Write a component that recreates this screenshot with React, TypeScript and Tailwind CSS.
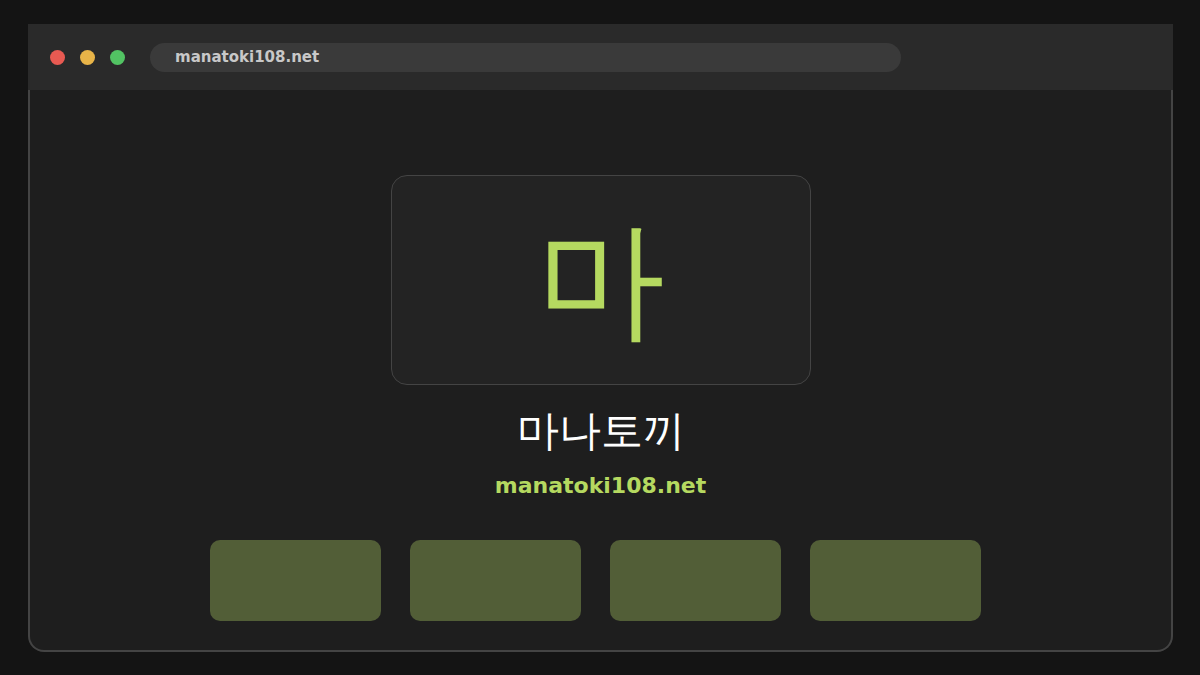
export default function App() {
  const dv = { fontFamily: '"DejaVu Sans", "Liberation Sans", sans-serif' };
  return (
    <div className="w-[1200px] h-[675px] bg-[#141414] pt-[24px] px-[28px]">
      <div className="w-[1145px] flex flex-col">
        <div className="h-[66px] bg-[#2a2a2a] flex items-center pl-[22px]">
          <div className="flex gap-[15px] mr-[25px]">
            <span className="w-[15px] h-[15px] rounded-full bg-[#e85a52]" />
            <span className="w-[15px] h-[15px] rounded-full bg-[#e8b448]" />
            <span className="w-[15px] h-[15px] rounded-full bg-[#52c363]" />
          </div>
          <div className="w-[751px] h-[29px] rounded-full bg-[#3a3a3a] flex items-center pl-[25px]">
            <span className="text-[15px] font-bold text-[#c8c8c8]" style={dv}>manatoki108.net</span>
          </div>
        </div>
        <div className="h-[562px] bg-[#1e1e1e] border-x-2 border-b-2 border-[#444] rounded-b-[16px] flex flex-col items-center">
          <div className="mt-[85px] w-[420px] h-[210px] rounded-[16px] border border-[#444] bg-[#232323] flex items-center justify-center">
            <span className="text-[128px] leading-none text-[#b5d960]" style={dv}>마</span>
          </div>
          <div className="mt-[18px] text-[42px] leading-[56px] text-white" style={dv}>마나토끼</div>
          <div className="mt-[13px] text-[22px] leading-[28px] font-bold text-[#b5d960]" style={dv}>manatoki108.net</div>
          <div className="mt-[40px] mr-[10px] flex gap-[29px]">
            {[0, 1, 2, 3].map((i) => (
              <div key={i} className="w-[171px] h-[81px] rounded-[10px] bg-[#525e37]" />
            ))}
          </div>
        </div>
      </div>
    </div>
  );
}
